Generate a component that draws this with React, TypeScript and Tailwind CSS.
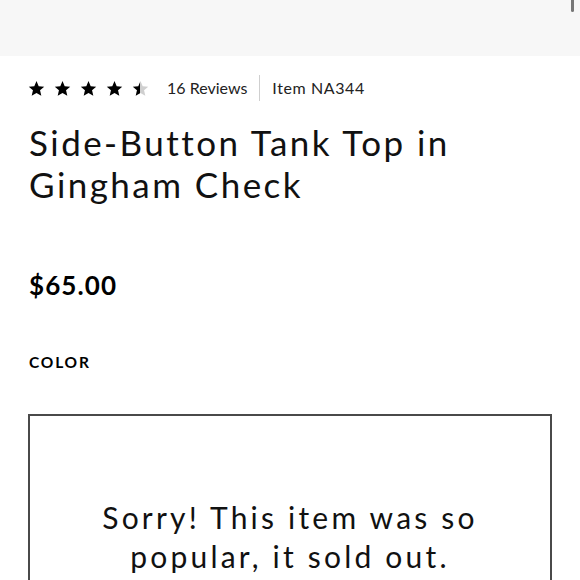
import React from 'react';

const font = { fontFamily: 'Lato, "Noto Sans", sans-serif' };

function Star({ fill = 'full' }: { fill?: 'full' | 'half' }) {
  return (
    <svg width="17" height="17" viewBox="0 0 24 24">
      <defs>
        <linearGradient id="halfStar" x1="0" x2="1" y1="0" y2="0">
          <stop offset="50%" stopColor="#000" />
          <stop offset="50%" stopColor="#cfcfcf" />
        </linearGradient>
      </defs>
      <path
        d="M12 1.5l3.1 7.2 7.8.7-5.9 5.2 1.8 7.7L12 18.2 5.2 22.3 7 14.6 1.1 9.4l7.8-.7z"
        fill={fill === 'full' ? '#000' : 'url(#halfStar)'}
      />
    </svg>
  );
}

export default function App() {
  return (
    <div className="w-[580px] h-[580px] overflow-hidden bg-white text-black relative" style={font}>
      {/* top image strip */}
      <div className="h-[56px] bg-[#f7f7f7]" />
      <div className="absolute right-[6px] top-0 w-[3px] h-[12px] rounded-b-sm bg-[#777]" />

      <div className="px-[28px]">
        {/* rating row */}
        <div className="flex items-center mt-[19px] h-[26px]">
          <div className="flex items-center gap-[9px]">
            <Star />
            <Star />
            <Star />
            <Star />
            <Star fill="half" />
          </div>
          <span className="ml-[18px] text-[16px] text-[#222]">16 Reviews</span>
          <span className="mx-[12px] w-px h-[26px] bg-[#cfcfcf]" />
          <span className="text-[16px] text-[#222] tracking-[0.6px]">Item NA344</span>
        </div>

        {/* title */}
        <h1 className="mt-[20px] ml-[1px] text-[35px] leading-[42px] font-normal text-[#111] tracking-[2.45px]">
          Side-Button Tank Top in
          <br />
          Gingham Check
        </h1>

        {/* price */}
        <div className="mt-[65px] ml-[1px] text-[26px] leading-[30px] font-bold tracking-[1.1px]">$65.00</div>

        {/* color label */}
        <div className="mt-[53px] ml-[1px] text-[15.5px] leading-[18px] font-bold tracking-[1.8px]">COLOR</div>

        {/* sold out box */}
        <div className="mt-[43px] border-2 border-[#4a4a4a] h-[200px] flex flex-col items-center pt-[82px]">
          <p className="text-[30px] leading-[39px] text-center text-[#111] tracking-[3.2px]">
            Sorry! This item was so
            <br />
            popular, it sold out.
          </p>
        </div>
      </div>
    </div>
  );
}
